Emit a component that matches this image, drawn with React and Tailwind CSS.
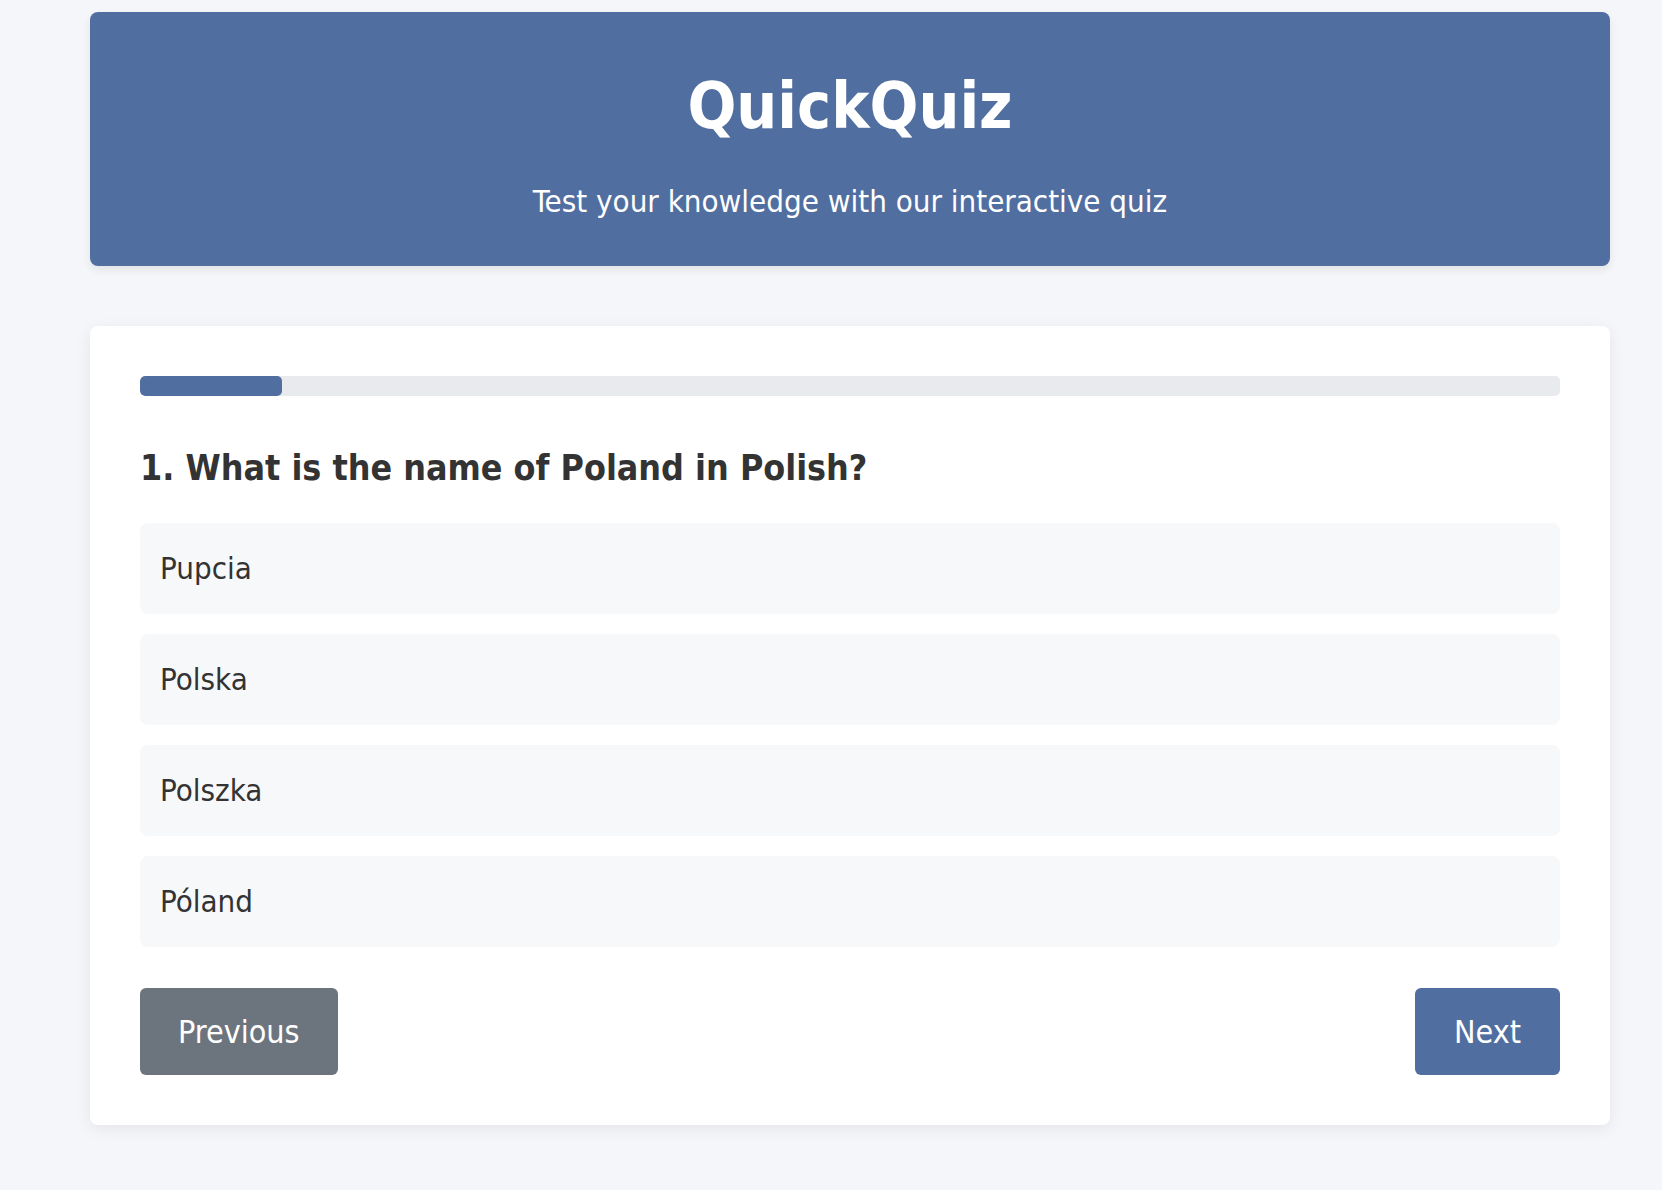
import React, { useState } from 'react';

const questions = [
    {
        text: 'What is the name of Poland in Polish?',
        options: ['Pupcia', 'Polska', 'Polszka', 'Póland'],
    },
];

const fontStack = { fontFamily: '"DejaVu Sans Condensed", "DejaVu Sans", Verdana, sans-serif' };

const App = () => {
    const [current, setCurrent] = useState(0);
    const [selected, setSelected] = useState(null);
    const q = questions[current];

    return (
        <div className="min-h-screen bg-[#f5f6fa] pt-[12px] pb-[40px]" style={fontStack}>
            <div className="ml-[90px] w-[1520px]">
                {/* Header */}
                <header className="h-[254px] rounded-[8px] bg-[#516ea0] text-white text-center shadow-[0_4px_10px_rgba(0,0,0,0.08)] pt-[62px]">
                    <h1 className="text-[64px] leading-none font-bold">QuickQuiz</h1>
                    <p className="mt-[48px] text-[31px] leading-none">Test your knowledge with our interactive quiz</p>
                </header>

                {/* Quiz card */}
                <main className="mt-[60px] rounded-[8px] bg-white p-[50px] shadow-[0_4px_16px_rgba(0,0,0,0.07)]">
                    <div className="h-[20px] rounded-[5px] bg-[#e9eaee] overflow-hidden">
                        <div className="h-full w-[10%] rounded-[5px] bg-[#516ea0]" />
                    </div>

                    <h2 className="mt-[54px] text-[35.5px] leading-[36px] font-bold text-[#333333]">
                        {current + 1}. {q.text}
                    </h2>

                    <div className="mt-[37px] flex flex-col gap-[20px]">
                        {q.options.map((opt, i) => (
                            <button
                                key={opt}
                                onClick={() => setSelected(i)}
                                className={`h-[91px] flex items-center px-[20px] rounded-[8px] text-left text-[31px] text-[#333333] ${selected === i ? 'bg-[#e3e9f4]' : 'bg-[#f7f8fa]'}`}
                            >
                                {opt}
                            </button>
                        ))}
                    </div>

                    <div className="mt-[41px] flex justify-between">
                        <button
                            onClick={() => setCurrent(Math.max(0, current - 1))}
                            className="h-[87px] px-[38px] rounded-[6px] bg-[#6c757d] text-white text-[32px]"
                        >
                            Previous
                        </button>
                        <button
                            onClick={() => setCurrent(Math.min(questions.length - 1, current + 1))}
                            className="h-[87px] px-[39px] rounded-[6px] bg-[#516ea0] text-white text-[32px]"
                        >
                            Next
                        </button>
                    </div>
                </main>
            </div>
        </div>
    );
};

export default App;
